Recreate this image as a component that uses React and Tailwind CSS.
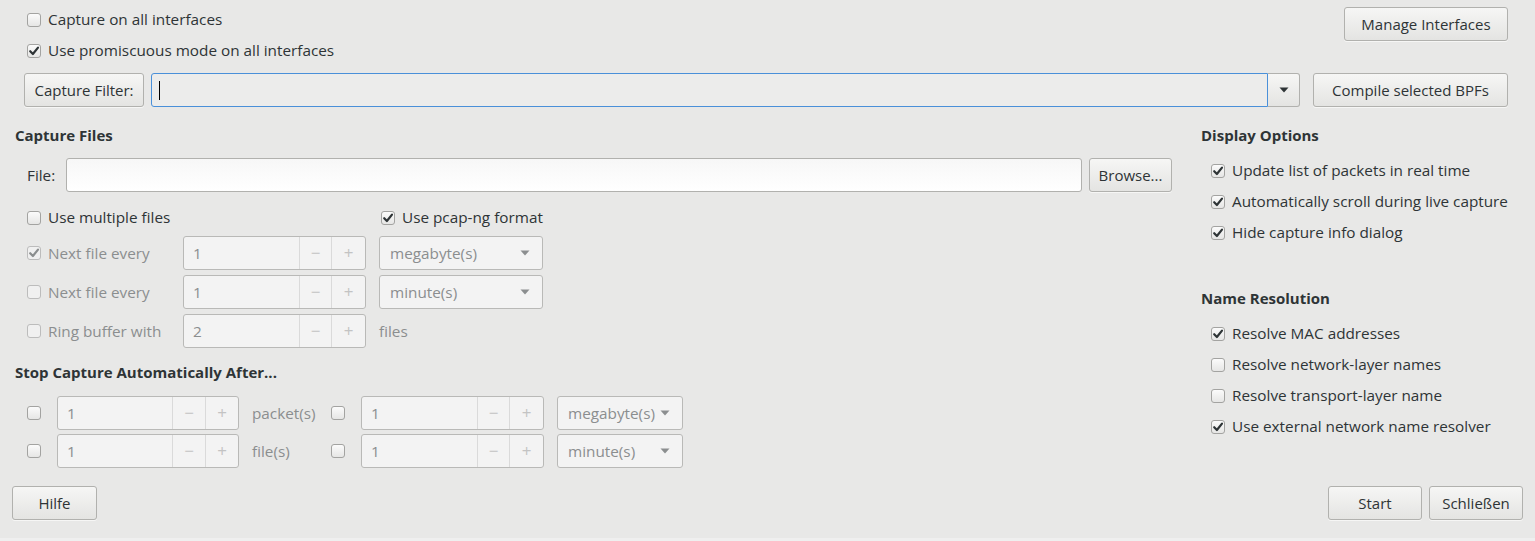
import React from 'react';

const font = { fontFamily: '"Open Sans", "Noto Sans", sans-serif' };

// small check mark used by all checkboxes
const Check = ({ checked, disabled }) => (
  <span
    className={`w-[14px] h-[14px] shrink-0 rounded-[3px] border flex items-center justify-center ${
      disabled
        ? 'border-[#bcbcbc] bg-[#f0f0f0]'
        : 'border-[#a3a3a1] bg-gradient-to-b from-[#fbfbfb] to-[#e6e6e5]'
    }`}
  >
    {checked && (
      <svg width="12" height="12" viewBox="0 0 12 12">
        <path
          d="M2.2 6.2 L4.9 9 L10 2.6"
          fill="none"
          stroke={disabled ? '#8b8e8f' : '#2e3436'}
          strokeWidth="2.2"
          strokeLinecap="round"
          strokeLinejoin="round"
        />
      </svg>
    )}
  </span>
);

const CheckRow = ({ label, checked, disabled, className = '' }) => (
  <div className={`flex items-center gap-[7px] h-[31px] ${className}`}>
    <Check checked={checked} disabled={disabled} />
    <span className={disabled ? 'text-[#8b8e8f]' : 'text-[#2e3436]'}>{label}</span>
  </div>
);

const Button = ({ children, className = '' }) => (
  <button
    className={`h-[34px] rounded-[3px] border border-[#b1b1ae] bg-gradient-to-b from-[#f6f6f5] to-[#e4e4e2] text-[#2e3436] text-[15px] shadow-[0_1px_0_rgba(255,255,255,0.6)] ${className}`}
  >
    {children}
  </button>
);

const Arrow = ({ color = '#2e3436' }) => (
  <svg width="10" height="6" viewBox="0 0 10 6">
    <path d="M0.5 0.5 L9.5 0.5 L5 5.5 Z" fill={color} />
  </svg>
);

// disabled spin box: value field plus "−" and "+" steppers
const Spin = ({ value, w = 'w-[183px]', minus = 'w-[32px]', plus = 'w-[34px]' }) => (
  <div className={`${w} h-[34px] shrink-0 flex rounded-[3px] border border-[#b9b9b7] bg-[#f3f3f3] text-[#8b8e8f]`}>
    <span className="flex-1 flex items-center pl-[9px]">{value}</span>
    <span className={`${minus} border-l border-[#dadada] flex items-center justify-center text-[#c3c3c3] text-[17px]`}>−</span>
    <span className={`${plus} border-l border-[#dadada] flex items-center justify-center text-[#c3c3c3] text-[17px]`}>+</span>
  </div>
);

const Combo = ({ value, w = 'w-[164px]' }) => (
  <div className={`${w} h-[34px] shrink-0 flex items-center justify-between rounded-[3px] border border-[#b9b9b7] bg-[#f3f3f3] text-[#8b8e8f] pl-[10px] pr-[12px]`}>
    <span>{value}</span>
    <Arrow color="#8b8e8f" />
  </div>
);

export default function App() {
  return (
    <div style={font} className="w-[1535px] h-[541px] bg-[#e8e8e7] text-[15.3px] text-[#2e3436] flex flex-col">
      <div className="flex-1 flex flex-col">
        {/* interface options */}
        <div className="flex justify-between pt-[4px] pl-[27px] pr-[27px]">
          <div className="flex flex-col">
            <CheckRow label="Capture on all interfaces" />
            <CheckRow label="Use promiscuous mode on all interfaces" checked />
          </div>
          <Button className="w-[164px] mt-[3px]">Manage Interfaces</Button>
        </div>

        {/* capture filter */}
        <div className="flex items-center mt-[7px] pl-[24px] pr-[27px]">
          <Button className="w-[120px]">Capture Filter:</Button>
          <div className="flex-1 flex h-[34px] ml-[7px]">
            <div className="flex-1 flex items-center rounded-l-[3px] border border-[#4a90d9] bg-[#ececeb] pl-[7px]">
              <span className="w-px h-[19px] bg-black" />
            </div>
            <div className="w-[32px] flex items-center justify-center rounded-r-[3px] border border-l-0 border-[#b1b1ae] bg-gradient-to-b from-[#f6f6f5] to-[#e4e4e2]">
              <Arrow />
            </div>
          </div>
          <Button className="w-[195px] ml-[13px]">Compile selected BPFs</Button>
        </div>

        <div className="flex mt-[18px]">
          {/* capture files + stop conditions */}
          <div className="w-[1172px] pl-[15px]">
            <div className="h-[20px] flex items-center font-bold text-[15px]">Capture Files</div>
            <div className="flex items-center mt-[13px] pl-[12px]">
              <span className="w-[39px]">File:</span>
              <div className="flex-1 h-[34px] rounded-[3px] border border-[#b1b1ae] bg-gradient-to-b from-[#f7f7f7] to-white" />
              <Button className="w-[83px] ml-[7px]">Browse...</Button>
            </div>

            <div className="pl-[12px]">
              <div className="flex mt-[10px]">
                <CheckRow label="Use multiple files" className="w-[354px] h-[30px]" />
                <CheckRow label="Use pcap-ng format" checked className="h-[30px]" />
              </div>
              <div className="flex items-center mt-[3px]">
                <CheckRow label="Next file every" checked disabled className="w-[156px]" />
                <Spin value="1" />
                <span className="w-[13px]" />
                <Combo value="megabyte(s)" />
              </div>
              <div className="flex items-center mt-[5px]">
                <CheckRow label="Next file every" disabled className="w-[156px]" />
                <Spin value="1" />
                <span className="w-[13px]" />
                <Combo value="minute(s)" />
              </div>
              <div className="flex items-center mt-[5px]">
                <CheckRow label="Ring buffer with" disabled className="w-[156px]" />
                <Spin value="2" />
                <span className="ml-[13px] text-[#8b8e8f]">files</span>
              </div>
            </div>

            <div className="h-[20px] flex items-center font-bold text-[15px] mt-[14px]">Stop Capture Automatically After...</div>
            <div className="pl-[12px]">
              {[
                ['packet(s)', 'megabyte(s)'],
                ['file(s)', 'minute(s)'],
              ].map(([unit, combo], i) => (
                <div key={i} className={`flex items-center ${i === 0 ? 'mt-[14px]' : 'mt-[4px]'}`}>
                  <Check />
                  <span className="w-[16px]" />
                  <Spin value="1" w="w-[182px]" minus="w-[33px]" plus="w-[33px]" />
                  <span className="w-[79px] ml-[13px] text-[#8b8e8f]">{unit}</span>
                  <Check />
                  <span className="w-[16px]" />
                  <Spin value="1" />
                  <span className="w-[13px]" />
                  <Combo value={combo} w="w-[126px]" />
                </div>
              ))}
            </div>
          </div>

          {/* display options + name resolution */}
          <div className="pl-[29px] flex-1">
            <div className="h-[20px] flex items-center font-bold text-[15px]">Display Options</div>
            <div className="pl-[10px] mt-[10px]">
              <CheckRow label="Update list of packets in real time" checked />
              <CheckRow label="Automatically scroll during live capture" checked />
              <CheckRow label="Hide capture info dialog" checked />
            </div>
            <div className="h-[20px] flex items-center font-bold text-[15px] mt-[40px]">Name Resolution</div>
            <div className="pl-[10px] mt-[10px]">
              <CheckRow label="Resolve MAC addresses" checked />
              <CheckRow label="Resolve network-layer names" />
              <CheckRow label="Resolve transport-layer name" />
              <CheckRow label="Use external network name resolver" checked />
            </div>
          </div>
        </div>

        {/* dialog buttons */}
        <div className="flex justify-between px-[12px] mt-[18px]">
          <Button className="w-[85px]">Hilfe</Button>
          <div className="flex gap-[7px]">
            <Button className="w-[94px]">Start</Button>
            <Button className="w-[94px]">Schließen</Button>
          </div>
        </div>
      </div>
      <div className="h-[3px] bg-[#efefef]" />
    </div>
  );
}
